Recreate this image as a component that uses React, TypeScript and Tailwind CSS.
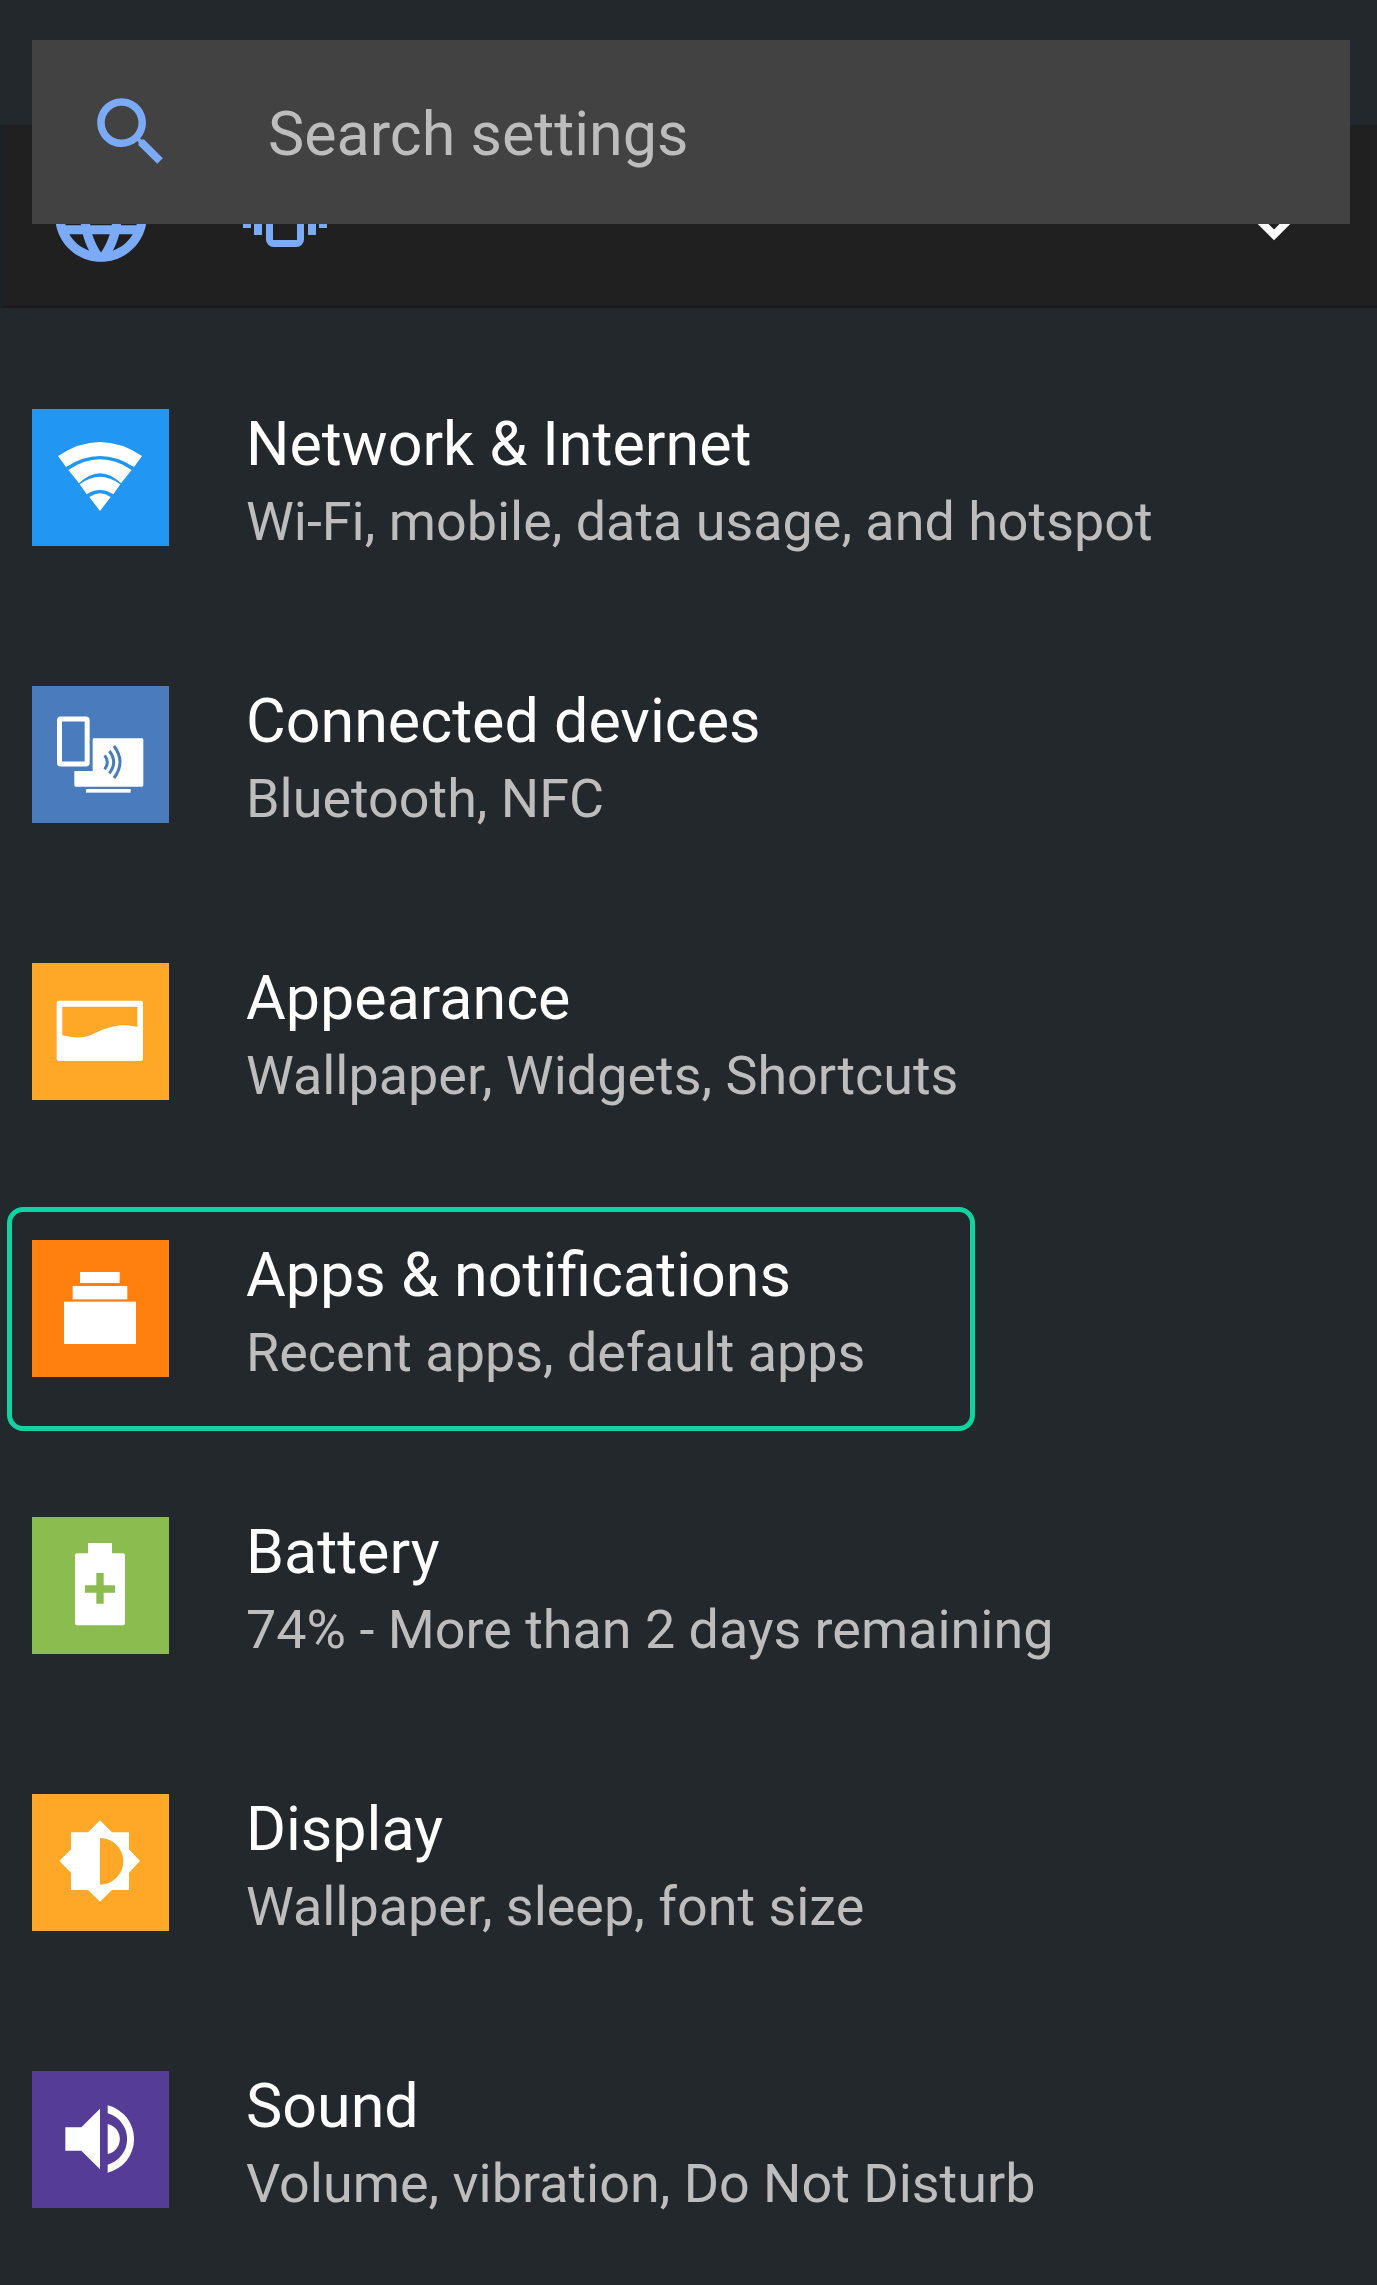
import React from "react";

const Ico = ({ vb, children }: { vb: string; children: React.ReactNode }) => (
  <svg viewBox={vb} className="w-full h-full block">{children}</svg>
);

const rows: { t: string; s: string; bg: string; icon: React.ReactNode }[] = [
  {
    t: "Network & Internet",
    s: "Wi-Fi, mobile, data usage, and hotspot",
    bg: "bg-[#2196f3]",
    icon: (
      <Ico vb="36 42 411 411">
        <g fill="#fff">
          <path d="M114 183Q240 99 366 183L342 216Q240 150 138 216Z" />
          <path d="M145 225Q240 161 335 225L303 265Q240 205 177 265Z" />
          <path d="M179 268Q240 222 301 268L280 298Q240 272 200 298Z" />
          <path d="M208 306Q240 284 272 306L240 348Z" />
        </g>
      </Ico>
    ),
  },
  {
    t: "Connected devices",
    s: "Bluetooth, NFC",
    bg: "bg-[#4a7cbd]",
    icon: (
      <Ico vb="36 48 411 411">
        <rect x="118.5" y="147" width="83" height="135" rx="4" fill="none" stroke="#fff" strokeWidth="15" />
        <path d="M218 209a4 4 0 0 1 4-4H366a4 4 0 0 1 4 4V346a4 4 0 0 1-4 4H167a4 4 0 0 1-4-4V303H218Z" fill="#fff" />
        <rect x="198" y="357" width="134" height="11" fill="#fff" />
        <g fill="none" stroke="#4a7cbd" strokeWidth="9">
          <path d="M254 256Q270 276 254 298" />
          <path d="M268 243Q294 276 268 310" />
          <path d="M282 228Q318 276 282 324" />
        </g>
      </Ico>
    ),
  },
  {
    t: "Appearance",
    s: "Wallpaper, Widgets, Shortcuts",
    bg: "bg-[#ffa726]",
    icon: (
      <Ico vb="36 39 411 411">
        <path
          fillRule="evenodd"
          fill="#fff"
          d="M116 152H363a6 6 0 0 1 6 6V327a6 6 0 0 1-6 6H116a6 6 0 0 1-6-6V158a6 6 0 0 1 6-6ZM127 170V256C160 264 190 265 215 254C250 238 290 216 352 231V170Z"
        />
      </Ico>
    ),
  },
  {
    t: "Apps & notifications",
    s: "Recent apps, default apps",
    bg: "bg-[#ff7f0f]",
    icon: (
      <Ico vb="96 120 411 411">
        <g fill="#fff">
          <rect x="240" y="216" width="119" height="33" />
          <rect x="218" y="258" width="164" height="40" />
          <rect x="192" y="305" width="216" height="127" />
        </g>
      </Ico>
    ),
  },
  {
    t: "Battery",
    s: "74% - More than 2 days remaining",
    bg: "bg-[#8bbc4f]",
    icon: (
      <Ico vb="36 21 411 411">
        <path
          fill="#fff"
          d="M204 99H276V130H309a6 6 0 0 1 6 6V340a6 6 0 0 1-6 6H171a6 6 0 0 1-6-6V136a6 6 0 0 1 6-6H204Z"
        />
        <path fill="#8bbc4f" d="M229 189H251V226H285V248H251V281H229V248H195V226H229Z" />
      </Ico>
    ),
  },
  {
    t: "Display",
    s: "Wallpaper, sleep, font size",
    bg: "bg-[#ffa726]",
    icon: (
      <Ico vb="36 12 411 411">
        <path
          fill="#fff"
          d="M240 91L276 127H327V178L360 213L327 248V300H276L240 335L204 300H153V248L118 213L153 178V127H204Z"
        />
        <path fill="#ffa726" d="M240 144A70 70 0 0 1 240 284Z" />
      </Ico>
    ),
  },
  {
    t: "Sound",
    s: "Volume, vibration, Do Not Disturb",
    bg: "bg-[#553c97]",
    icon: (
      <Ico vb="36 33 411 411">
        <g fill="#fff">
          <path d="M136 202H184L240 146V328L184 272H136Z" />
          <path d="M263 192A46 46 0 0 1 263 282Z" />
          <path d="M263 136A104 104 0 0 1 263 338V314A80 80 0 0 0 263 160Z" />
        </g>
      </Ico>
    ),
  },
];

export default function App() {
  return (
    <div className="relative w-[1377px] h-[2285px] overflow-hidden bg-[#23282c] font-['Roboto',sans-serif]">
      <div className="h-[125px]" />
      <div className="h-[183px] flex items-end pl-[41px] pr-[57px] pb-[34px] bg-[#202020] border-l-[5px] border-b-[3px] border-l-[#1c2124] border-b-[#1b1b1b]">
        <svg viewBox="0 0 24 24" className="w-[110px] h-[110px] text-[#7baaf7]">
          <path
            fill="currentColor"
            d="M11.99 2C6.47 2 2 6.48 2 12s4.47 10 9.99 10C17.52 22 22 17.52 22 12S17.52 2 11.99 2zm6.93 6h-2.95c-.32-1.25-.78-2.45-1.38-3.56 1.84.63 3.37 1.91 4.33 3.56zM12 4.04c.83 1.2 1.48 2.53 1.91 3.96h-3.82c.43-1.43 1.08-2.76 1.91-3.96zM4.26 14C4.1 13.36 4 12.69 4 12s.1-1.36.26-2h3.38c-.08.66-.14 1.32-.14 2 0 .68.06 1.34.14 2H4.26zm.82 2h2.95c.32 1.25.78 2.45 1.38 3.56-1.84-.63-3.37-1.9-4.33-3.56zm2.95-8H5.08c.96-1.66 2.49-2.93 4.33-3.56C8.81 5.55 8.35 6.75 8.03 8zM12 19.96c-.83-1.2-1.48-2.53-1.91-3.96h3.82c-.43 1.43-1.08 2.76-1.91 3.96zM14.34 14H9.66c-.09-.66-.16-1.32-.16-2 0-.68.07-1.35.16-2h4.68c.09.65.16 1.32.16 2 0 .68-.07 1.34-.16 2zm.25 5.56c.6-1.11 1.06-2.31 1.38-3.56h2.95c-.96 1.65-2.49 2.93-4.33 3.56zM16.36 14c.08-.66.14-1.32.14-2 0-.68-.06-1.34-.14-2h3.38c.16.64.26 1.31.26 2s-.1 1.36-.26 2h-3.38z"
          />
        </svg>
        <svg viewBox="0 0 84 117" className="ml-[87px] w-[84px] h-[117px] mb-[24px] text-[#7baaf7]">
          <g fill="currentColor">
            <rect x="0" y="0" width="8" height="98" />
            <rect x="11" y="0" width="8" height="105" />
            <rect x="65" y="0" width="8" height="105" />
            <rect x="76" y="0" width="8" height="98" />
          </g>
          <rect x="26.5" y="0" width="31" height="113.5" rx="4" fill="none" stroke="currentColor" strokeWidth="7" />
        </svg>
        <svg viewBox="0 0 24 24" className="ml-auto w-[92px] h-[92px] text-white">
          <path fill="currentColor" d="M7.41 8.59L12 13.17l4.59-4.58L18 10l-6 6-6-6z" />
        </svg>
      </div>

      <div className="pt-[31px]">
        {rows.map((r) => (
          <div key={r.t} className="relative h-[277px] flex items-center pl-[32px]">
            <div className={`w-[137px] h-[137px] shrink-0 ${r.bg}`}>{r.icon}</div>
            <div className="ml-[77px] mt-[9px]">
              <div className="text-[61px] leading-[79px] text-white">{r.t}</div>
              <div className="text-[53.9px] leading-[76px] text-[#bdbdbd]">{r.s}</div>
            </div>
            {r.t.startsWith("Apps") && (
              <div className="absolute left-[7px] top-[37px] w-[968px] h-[224px] border-[5px] border-[#0fd3a0] rounded-[16px]" />
            )}
          </div>
        ))}
      </div>

      <div className="absolute left-[32px] top-[40px] w-[1318px] h-[184px] bg-[#424242] flex items-center pl-[54px]">
        <svg viewBox="0 0 24 24" className="w-[90px] h-[90px] text-[#7baaf7] shrink-0">
          <path
            fill="currentColor"
            d="M15.5 14h-.79l-.28-.27C15.41 12.59 16 11.11 16 9.5 16 5.91 13.09 3 9.5 3S3 5.91 3 9.5 5.91 16 9.5 16c1.61 0 3.09-.59 4.23-1.57l.27.28v.79l5 4.99L20.49 19l-4.99-5zm-6 0C7.01 14 5 11.99 5 9.5S7.01 5 9.5 5 14 7.01 14 9.5 11.99 14 9.5 14z"
          />
        </svg>
        <span className="ml-[92px] mt-[6px] text-[61px] text-[#bdbdbd]">Search settings</span>
      </div>
    </div>
  );
}
